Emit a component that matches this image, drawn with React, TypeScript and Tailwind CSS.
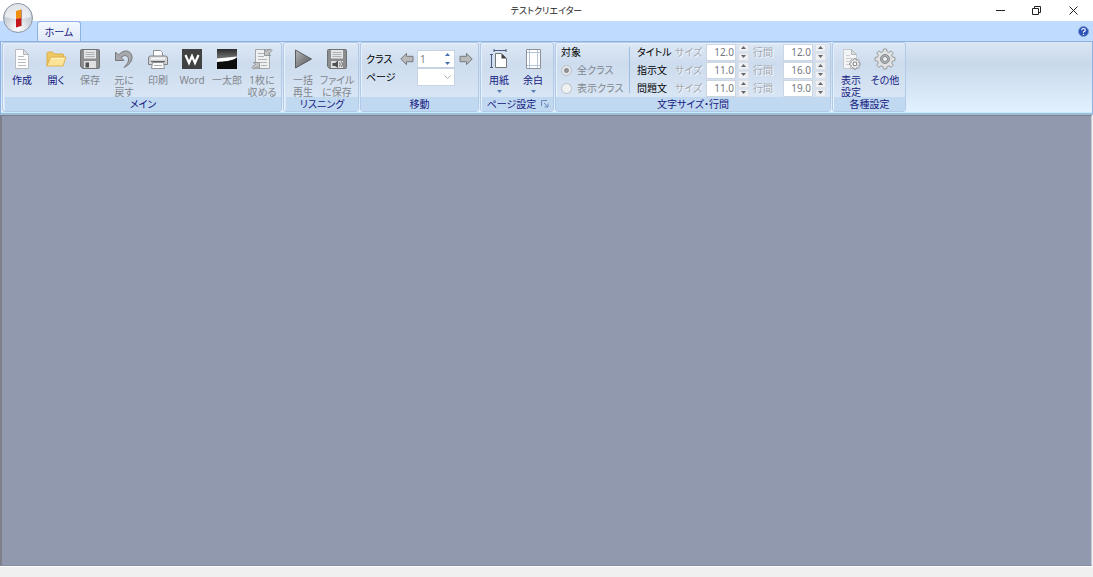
import { useState } from 'react';
import type { ReactNode } from 'react';

const NewIcon = () => (
  <svg width="22" height="22" viewBox="0 0 22 22">
    <path d="M4.500 1.500h8l5 5v14h-13z" fill="#fdfdfd" stroke="#b9bcc0" />
    <path d="M12.500 1.500v5h5z" fill="#dcdfe3" stroke="#b0b3b7" />
    <path d="M7 8.500h6M7 11.500h8M7 14.500h8M7 17.500h8" stroke="#b9bcc0" />
  </svg>
);

const OpenIcon = () => (
  <svg width="22" height="22" viewBox="0 0 22 22">
    <path d="M2 18V5.500q0-1.500 1.500-1.500h4l2 2h8q1 0 1 1v3H5z" fill="#f0c964" stroke="#d9ad48" />
    <path d="M2 18 5.500 9H21l-3 9z" fill="#fbe49a" stroke="#dfb450" />
    <path d="M6.500 10.500H19" stroke="#fff3c0" />
  </svg>
);

const SaveIcon = ({ sound = false }: { sound?: boolean }) => (
  <svg width="22" height="22" viewBox="0 0 22 22">
    <path d="M1.500 2.500q0-1 1-1h17q1 0 1 1v17q0 1-1 1h-16l-2-2z" fill="#8b8d8f" stroke="#707274" />
    <path d="M5 2h12v8.500H5z" fill="#e4e6e8" />
    <path d="M6.500 4.500h9M6.500 6.500h9M6.500 8.500h9" stroke="#aeb1b4" />
    <path d="M5 13h12v7H5z" fill="#dfe0e1" />
    {sound ? (
      <>
        <path d="M6.500 15h2.500l3-2.500v7.500L9 18H6.500z" fill="#505254" />
        <path d="M13.500 14.500q1.500 2 0 4M15.500 13.500q2 3 0 5.500" fill="none" stroke="#606264" />
      </>
    ) : (
      <path d="M6.500 14.500h3.500v5H6.500z" fill="#505254" />
    )}
  </svg>
);

const UndoIcon = () => (
  <svg width="22" height="22" viewBox="0 0 22 22">
    <path d="M2.500 4v8.500h8.500L8 9.500q5-4 7 0c1.500 3-.5 6.500-4 10 6-3 9.500-8 7.500-13C16.500 2 10 1.500 5.500 7z" fill="#a6a8ab" stroke="#77797c" strokeLinejoin="round" />
  </svg>
);

const PrintIcon = () => (
  <svg width="22" height="22" viewBox="0 0 22 22">
    <path d="M6.500 8V2.500h7l2 2V8" fill="#fff" stroke="#8d9093" />
    <path d="M3.500 8h15q2 0 2 2v6.500h-19V10q0-2 2-2z" fill="#d0d2d4" stroke="#818386" />
    <path d="M4 10.500h14" stroke="#f5f5f5" strokeWidth="2" />
    <path d="M4 13.500h14" stroke="#606264" />
    <path d="M5.500 14.500h11l1 6h-13z" fill="#fafafa" stroke="#929497" />
    <path d="M7 17.500h8" stroke="#a9abad" />
  </svg>
);

const WordIcon = () => (
  <svg width="22" height="22" viewBox="0 0 22 22">
    <rect x="1" y="1" width="20" height="20" fill="#424242" />
    <path d="M4.500 7 8 15 11 8l3 7 3.500-8" fill="none" stroke="#fff" strokeWidth="2.200" />
  </svg>
);

const TaroIcon = () => (
  <svg width="22" height="22" viewBox="0 0 22 22">
    <defs>
      <linearGradient id="taro" x1="0" y1="0" x2="0" y2="1">
        <stop stopColor="#2b2b2b" />
        <stop offset=".4" stopColor="#6a6a6a" />
      </linearGradient>
    </defs>
    <rect x="1" y="1" width="20" height="20" fill="url(#taro)" />
    <path d="M1 10.500 21 8.500q-1 3.500-9 4.500L1 14z" fill="#fff" />
    <path d="M1 14q12 0 20-4v11H1z" fill="#0c0c0c" />
  </svg>
);

const FitIcon = () => (
  <svg width="22" height="22" viewBox="0 0 22 22">
    <path d="M4.500 1.500h14v19h-14z" fill="#eeeff0" stroke="#a5a8ab" />
    <path d="M7 5.500h6M7 8.500h6M7 11.500h9M9 14.500h7M10 17.500h6" stroke="#b2b5b8" />
    <path d="m19.500 1 1.500 1.500-3 3 1.500 2h-6v-6l2 1.500zM2.500 21 1 19.500l3-3-1.500-2h6v6l-2-1.500z" fill="#bfc1c3" stroke="#85888b" strokeWidth=".8" />
  </svg>
);

const PlayIcon = () => (
  <svg width="22" height="22" viewBox="0 0 22 22">
    <defs>
      <linearGradient id="play" x1="0" y1="0" x2="1" y2="1">
        <stop stopColor="#b5b7b9" />
        <stop offset="1" stopColor="#505254" />
      </linearGradient>
    </defs>
    <path d="M3.500 2 19.500 11l-16 9z" fill="url(#play)" stroke="#5c5e60" strokeLinejoin="round" />
  </svg>
);

const PaperIcon = () => (
  <svg width="22" height="22" viewBox="0 0 22 22">
    <path d="M6 2.500h12M6 1v3M18 1v3M3.500 6v14M2 6.500h3M2 19.500h3" stroke="#4d5b7c" />
    <path d="M7.500 5.500h6l5 5v9h-11z" fill="#fff" stroke="#75777b" />
    <path d="M13.500 5.500v5h5z" fill="#3e4042" />
  </svg>
);

const MarginIcon = () => (
  <svg width="22" height="22" viewBox="0 0 22 22">
    <path d="M4.500 1.500h14v19h-14z" fill="#fff" stroke="#8d939c" />
    <path d="M7.500 2v18M15.500 2v18M5 4.500h13M5 17.500h13" stroke="#b2c5dd" />
  </svg>
);

const gear = 'M9.500 1h3l.6 2.600 1.800.8 2.300-1.500 2 2-1.500 2.300.8 1.800 2.500.6v3l-2.500.6-.8 1.800 1.500 2.300-2 2-2.300-1.500-1.800.8-.6 2.400h-3l-.6-2.400-1.800-.8-2.300 1.500-2-2 1.500-2.300-.8-1.800-2.500-.6v-3l2.500-.6.8-1.800-1.500-2.300 2-2 2.300 1.500 1.800-.8z';

const GearIcon = () => (
  <svg width="22" height="22" viewBox="0 0 22 22">
    <path d={gear} fill="#dfe1e3" stroke="#979a9d" />
    <circle cx="11" cy="11" r="4.500" fill="#b2b5b8" stroke="#85888b" />
    <circle cx="11" cy="11" r="2.500" fill="#edf2f8" stroke="#85888b" />
  </svg>
);

const ViewIcon = () => (
  <svg width="22" height="22" viewBox="0 0 22 22">
    <path d="M3.500 1.500h8l5 5v14h-13z" fill="#f3f4f5" stroke="#c8cbce" />
    <path d="M11.500 1.500v5h5z" fill="#dcdee0" stroke="#b5b8bb" />
    <path d="M6 7.500h4M6 10.500h7M6 13.500h4M6 16.500h4" stroke="#cdd0d3" />
    <g transform="translate(9 10) scale(.54)">
      <path d={gear} fill="#eceded" stroke="#85888b" strokeWidth="1.600" />
      <circle cx="11" cy="11" r="3.500" fill="#fff" stroke="#85888b" strokeWidth="2" />
    </g>
  </svg>
);

const ArrowIcon = ({ flip = false }: { flip?: boolean }) => (
  <svg width="14" height="14" viewBox="0 0 14 14" className={flip ? 'rotate-180' : ''}>
    <path d="M.8 7 6.500 1.300v3H13v5.400H6.500v3z" fill="#b7b9bb" stroke="#77797c" />
  </svg>
);

type GroupProps = { title: string; className: string; launcher?: boolean; children: ReactNode };

const Group = ({ title, className, launcher, children }: GroupProps) => (
  <section
    className={`relative flex h-[70px] shrink-0 flex-col overflow-hidden rounded-[3px] border border-[#b0cae8] bg-linear-to-b from-[#dde8f5] via-[#cddcee] via-30% to-[#dce9f7] shadow-[inset_1px_1px_0_#e9f2fc] ${className}`}
  >
    <div className="flex min-h-0 flex-1">{children}</div>
    <h2 className={`flex h-[14px] items-center justify-center bg-[#c1d8f1] text-[#15207f] ${launcher ? 'pr-3' : ''}`}>
      {title}
    </h2>
    {launcher && (
      <button aria-label="ページ設定の詳細" className="absolute right-1 bottom-[3px]">
        <svg width="8" height="8" viewBox="0 0 8 8">
          <path d="M.5 6V.5H6M3 3l4 4M7 3.500V7H3.500" fill="none" stroke="#6689b8" />
        </svg>
      </button>
    )}
  </section>
);

type ToolProps = { icon: ReactNode; lines: string[]; disabled?: boolean; menu?: boolean; className?: string };

const Tool = ({ icon, lines, disabled, menu, className = 'w-[34px]' }: ToolProps) => (
  <button
    disabled={disabled}
    className={`flex shrink-0 flex-col items-center justify-start pt-[5px] whitespace-nowrap text-[#15207f] disabled:text-[#82868d] ${className}`}
  >
    <span className="mb-1">{icon}</span>
    {lines.map((line) => (
      <span key={line}>{line}</span>
    ))}
    {menu && (
      <svg width="5" height="3" viewBox="0 0 5 3" className="mt-1">
        <path d="M0 0h5L2.500 3z" fill="#567db1" />
      </svg>
    )}
  </button>
);

const Steps = ({ label, blue, onStep }: { label: string; blue?: boolean; onStep: (n: number) => void }) => (
  <span className="flex w-[11px] flex-col gap-px">
    {[1, -1].map((n) => (
      <button
        key={n}
        aria-label={`${label} ${n > 0 ? '増やす' : '減らす'}`}
        onClick={() => onStep(n)}
        className={`flex h-2 items-center justify-center ${blue ? '' : 'border border-[#dde1e7] bg-[#eef0f3]'}`}
      >
        <svg width="5" height="3" viewBox="0 0 5 3">
          <path d={n > 0 ? 'M0 3h5L2.500 0z' : 'M0 0h5L2.500 3z'} fill={blue ? '#4472ad' : '#64676c'} />
        </svg>
      </button>
    ))}
  </span>
);

const NumberBox = ({ label, initial }: { label: string; initial: number }) => {
  const [value, setValue] = useState(initial);
  return (
    <>
      <input
        aria-label={label}
        value={value.toFixed(1)}
        readOnly
        className="h-[17px] w-[30px] border border-[#ccd5e0] bg-white pr-px text-right text-[#74777e] outline-none"
      />
      <span className="pl-[2px]">
        <Steps label={label} onStep={(n) => setValue(value + n)} />
      </span>
    </>
  );
};

const rows = [
  { name: 'タイトル', size: 12, gap: 12 },
  { name: '指示文', size: 11, gap: 16 },
  { name: '問題文', size: 11, gap: 19 },
];

const faded = 'text-[#a5a9af] [text-shadow:1px_1px_0_#f4f8fd]';

const TextRow = ({ name, size, gap }: { name: string; size: number; gap: number }) => (
  <div className="grid h-[18px] grid-cols-[38px_31px_30px_17px_30px_30px_14px] items-center whitespace-nowrap">
    <span className="text-black">{name}</span>
    <span className={faded}>サイズ</span>
    <NumberBox label={`${name} サイズ`} initial={size} />
    <span className={faded}>行間</span>
    <NumberBox label={`${name} 行間`} initial={gap} />
  </div>
);

const radio =
  'h-[11px] w-[11px] appearance-none rounded-full border border-[#b9bec5] bg-[#f0f1f3] checked:bg-[radial-gradient(circle,#8d9197_0_2px,#e6e8eb_3px)]';

const TitleBar = () => (
  <header className="relative flex h-[21px] items-center justify-center bg-white text-[#222]">
    <h1 className="text-[9px]">テストクリエイター</h1>
    <div className="absolute inset-y-0 right-0 flex">
      <button aria-label="最小化" className="flex w-9 items-center justify-center">
        <svg width="9" height="9" viewBox="0 0 9 9"><path d="M0 4.500h9" stroke="#222" /></svg>
      </button>
      <button aria-label="元に戻す" className="flex w-9 items-center justify-center">
        <svg width="9" height="9" viewBox="0 0 9 9">
          <path d="M.5 2.500h6v6h-6zM2.500 2V.5h6v6H7" fill="none" stroke="#222" />
        </svg>
      </button>
      <button aria-label="閉じる" className="flex w-[39px] items-center justify-center">
        <svg width="9" height="9" viewBox="0 0 9 9"><path d="m.5.5 8 8m0-8-8 8" stroke="#222" /></svg>
      </button>
    </div>
  </header>
);

const Orb = () => (
  <button aria-label="アプリケーションメニュー" className="absolute top-[2px] left-[2px] z-10">
    <svg width="32" height="32" viewBox="0 0 32 32">
      <defs>
        <radialGradient id="orb" cx=".5" cy=".85" r=".85">
          <stop stopColor="#ffffff" />
          <stop offset=".5" stopColor="#d0d5dc" />
          <stop offset="1" stopColor="#b3bac5" />
        </radialGradient>
      </defs>
      <circle cx="16" cy="16" r="14.500" fill="url(#orb)" stroke="#8c97a7" />
      <path d="M3 15a13 13 0 0 1 26 0q-13 4-26 0z" fill="#fff" opacity=".6" />
      <path d="m14 9 5-1.500V16l-5 1z" fill="#f0900c" />
      <path d="m14 17 5-1v8l-5 1.500z" fill="#c4161c" />
      <path d="m19 7.500 1 .5v16l-1 .5z" fill="#8d4a30" opacity=".6" />
    </svg>
  </button>
);

const App = () => {
  const [page, setPage] = useState(1);

  return (
    <div className="relative flex min-h-screen flex-col overflow-hidden bg-[#f0f0f0] font-['Noto_Sans','Noto_Sans_CJK_JP',sans-serif] text-[10px] leading-[12px] [font-feature-settings:'palt']">
      <TitleBar />
      <Orb />

      <nav className="flex h-5 items-end justify-between bg-[#bfdbff] pr-1 pl-[37px]">
        <button className="relative z-10 h-5 w-11 rounded-t-[3px] border border-b-0 border-[#8db2e3] bg-linear-to-b from-[#f3f8fe] to-[#dfe9f6] text-[#15207f]">
          ホーム
        </button>
        <button aria-label="ヘルプ" className="self-center">
          <svg width="11" height="11" viewBox="0 0 11 11">
            <circle cx="5.500" cy="5.500" r="5" fill="#2952b8" stroke="#7c97ce" />
            <path d="M3.700 4.200Q3.700 2.500 5.500 2.500T7.300 4.200Q7.300 5 5.500 6v.8M5.500 7.800v1.200" fill="none" stroke="#fff" strokeWidth="1.200" />
          </svg>
        </button>
      </nav>

      <div className="flex h-[74px] gap-px border border-b-2 border-[#8db2e3] border-b-[#a0bbdc] bg-linear-to-b from-[#dbe6f4] via-[#c8d9eb] via-30% to-[#e3f2ff] pl-px shadow-[inset_0_-1px_0_#c2f0fa]">
        <Group title="メイン" className="w-[280px] pl-[2px]">
          <Tool icon={<NewIcon />} lines={['作成']} />
          <Tool icon={<OpenIcon />} lines={['開く']} />
          <Tool icon={<SaveIcon />} lines={['保存']} disabled />
          <Tool icon={<UndoIcon />} lines={['元に', '戻す']} disabled />
          <Tool icon={<PrintIcon />} lines={['印刷']} disabled />
          <Tool icon={<WordIcon />} lines={['Word']} disabled />
          <Tool icon={<TaroIcon />} lines={['一太郎']} disabled className="w-9" />
          <Tool icon={<FitIcon />} lines={['1枚に', '収める']} disabled />
        </Group>

        <Group title="リスニング" className="w-[76px] pl-[2px]">
          <Tool icon={<PlayIcon />} lines={['一括', '再生']} disabled />
          <Tool icon={<SaveIcon sound />} lines={['ファイル', 'に保存']} disabled />
        </Group>

        <Group title="移動" className="w-[119px]">
          <div className="mt-[7px] grid h-9 grid-cols-[34px_17px_38px_18px] items-center pl-[5px]">
            <label htmlFor="class-no">クラス</label>
            <button aria-label="前のクラス" onClick={() => setPage(page - 1)}><ArrowIcon /></button>
            <span className="flex h-[18px] items-center justify-between border border-[#c6d3e3] bg-white pr-px">
              <input
                id="class-no"
                value={page}
                readOnly
                className="w-5 pl-[2px] text-[#7b7e84] outline-none"
              />
              <Steps label="クラス" blue onStep={(n) => setPage(page + n)} />
            </span>
            <button aria-label="次のクラス" onClick={() => setPage(page + 1)} className="pl-1"><ArrowIcon flip /></button>
            <label htmlFor="page-no">ページ</label>
            <span />
            <span className="relative">
              <select id="page-no" className="block h-[18px] w-full appearance-none border border-[#c6d3e3] bg-white" />
              <svg width="7" height="5" viewBox="0 0 7 5" className="pointer-events-none absolute top-[7px] right-1">
                <path d="m.5.5 3 3 3-3" fill="none" stroke="#a9adb3" />
              </svg>
            </span>
          </div>
        </Group>

        <Group title="ページ設定" className="w-[74px] pl-px" launcher>
          <Tool icon={<PaperIcon />} lines={['用紙']} menu />
          <Tool icon={<MarginIcon />} lines={['余白']} menu />
        </Group>

        <Group title="文字サイズ・行間" className="w-[276px]">
          <fieldset className="flex w-[73px] flex-col pl-[5px] whitespace-nowrap">
            <legend className="float-left h-[18px] leading-[18px]">対象</legend>
            <label className="flex h-[18px] items-center gap-[5px] text-[#82868d]">
              <input type="radio" name="target" defaultChecked className={radio} />
              全クラス
            </label>
            <label className="flex h-[18px] items-center gap-[5px] text-[#82868d]">
              <input type="radio" name="target" className={radio} />
              表示クラス
            </label>
          </fieldset>
          <div className="mt-1 h-[46px] w-px bg-[#9dbde0]" />
          <div className="pl-[7px]">
            {rows.map((row) => (
              <TextRow key={row.name} {...row} />
            ))}
          </div>
        </Group>

        <Group title="各種設定" className="w-[74px] pl-px">
          <Tool icon={<ViewIcon />} lines={['表示', '設定']} />
          <Tool icon={<GearIcon />} lines={['その他']} />
        </Group>
      </div>

      <main className="mr-px flex-1 border border-l-2 border-[#7d8089] border-r-[#c5cad6] border-b-[#858da3] bg-[#9199ae]" />
      <footer className="h-[11px] border-t border-white bg-[#f0f0f0]" />
    </div>
  );
};

export default App;
